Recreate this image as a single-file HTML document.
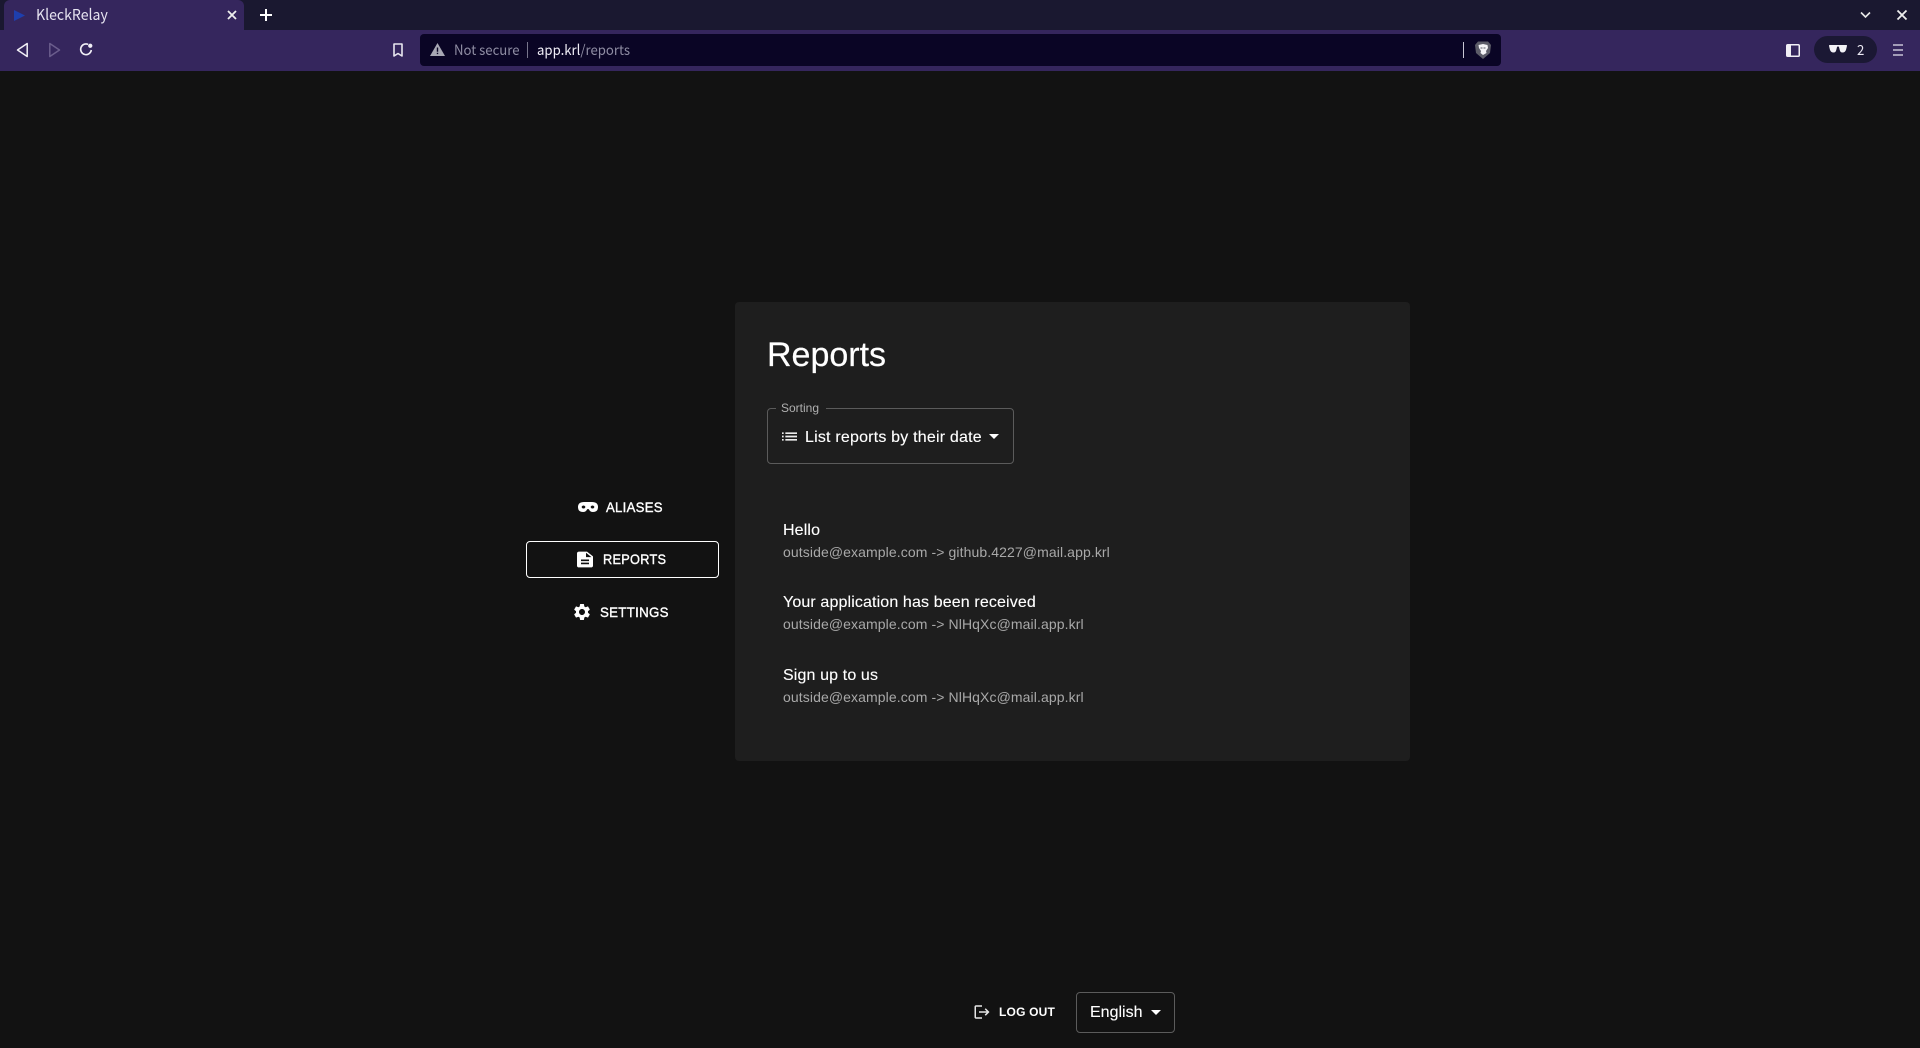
<!DOCTYPE html>
<html lang="en">
<head>
<meta charset="utf-8">
<title>KleckRelay</title>
<style>
html,body{margin:0;padding:0;width:1920px;height:1048px;overflow:hidden;background:#121212;color:#fff;font-family:"Liberation Sans",sans-serif}
.a{position:absolute;white-space:nowrap}
svg{position:absolute;display:block;overflow:visible}
.ui{font-family:"Noto Sans CJK JP","Liberation Sans",sans-serif;font-size:14px;line-height:20px;transform:scaleX(.94);transform-origin:0 50%}
.nav{font-size:14px;line-height:20px;color:#fff;-webkit-text-stroke:.4px #fff;letter-spacing:.3px;transform-origin:0 50%}
.h{font-size:16px;line-height:20px;color:#fff;letter-spacing:.13px;-webkit-text-stroke:.12px #fff}
.s{font-size:14px;line-height:18px;color:#a9a9a9;letter-spacing:.1px}
</style>
</head>
<body>
<div class="a" style="left:0;top:0;width:1920px;height:30px;background:#1a1830"></div>
<div class="a" style="left:0;top:30px;width:1920px;height:41px;background:#35265d"></div>
<div class="a" style="left:4px;top:0;width:240px;height:30px;background:#35265d;border-radius:6px 6px 0 0"></div>

<svg style="left:13px;top:9px" width="14" height="13" viewBox="0 0 14 13"><path d="M1 1l11 5.500L1 12z" fill="#1e3fae"/></svg>
<div class="a ui" style="left:36px;top:5px;color:#e6e3f0;font-size:15px">KleckRelay</div>
<svg style="left:227px;top:10px" width="10" height="10" viewBox="0 0 10 10"><path d="M1 1l8 8M9 1l-8 8" stroke="#eee" stroke-width="1.800"/></svg>
<svg style="left:260px;top:9px" width="12" height="12" viewBox="0 0 12 12"><path d="M6 0v12M0 6h12" stroke="#fff" stroke-width="2"/></svg>
<svg style="left:1860px;top:11px" width="11" height="8" viewBox="0 0 11 8"><path d="M1 1.500l4.500 4.500L10 1.500" fill="none" stroke="#e8e8e8" stroke-width="1.600"/></svg>
<svg style="left:1897px;top:10px" width="10" height="10" viewBox="0 0 10 10"><path d="M.5.500l9 9M9.500.500l-9 9" stroke="#eee" stroke-width="1.800"/></svg>

<svg style="left:16px;top:42px" width="13" height="16" viewBox="0 0 13 16"><path d="M11.200 1.500v13L1.500 8z" fill="none" stroke="#f0eef5" stroke-width="1.500" stroke-linejoin="round"/></svg>
<svg style="left:48px;top:42px" width="13" height="16" viewBox="0 0 13 16"><path d="M1.800 1.500v13L11.500 8z" fill="none" stroke="#6a5d8c" stroke-width="1.500" stroke-linejoin="round"/></svg>
<svg style="left:79px;top:42px" width="15" height="15" viewBox="0 0 14 14"><path d="M11.500 7.500A5 5 0 1 1 8.500 2.200" fill="none" stroke="#f0eef5" stroke-width="1.500"/><circle cx="10.500" cy="3.500" r="2" fill="#f0eef5"/></svg>
<svg style="left:393px;top:43px" width="10" height="14" viewBox="0 0 10 14"><path d="M1 1h8v12L5 10.500 1 13z" fill="none" stroke="#e8e6ef" stroke-width="1.600" stroke-linejoin="round"/></svg>

<div class="a" style="left:420px;top:34px;width:1081px;height:32px;background:#0a0525;border-radius:4px"></div>
<svg style="left:430px;top:43px" width="15" height="13" viewBox="0 0 15 13"><path d="M7.500 0L15 13H0z" fill="#a8a8b4"/><path d="M6.800 4.500h1.400v4.200H6.800zM6.800 9.700h1.400v1.400H6.800z" fill="#0a0525"/></svg>
<div class="a ui" style="left:454px;top:40px;color:#8f8da3">Not secure</div>
<div class="a" style="left:527px;top:42px;width:1px;height:16px;background:#77758c"></div>
<div class="a ui" style="left:537px;top:40px;color:#f1eff7">app.krl<span style="color:#8f8da3">/reports</span></div>
<div class="a" style="left:1463px;top:42px;width:1px;height:16px;background:#c8c6d4"></div>
<svg style="left:1475px;top:41px" width="16" height="18" viewBox="0 0 16 18"><path d="M3 0.500h10L16 4l-1 8-7 6-7-6L0 4z" fill="#5c5c68"/><path d="M3.500 4l4.500-1 4.500 1 .5 3-2 3 .5 2L8 14l-2.500-2 .5-2-2-3z" fill="#f4f4f6"/><path d="M5.500 6.500h2v1h-2zM8.500 6.500h2v1h-2z" fill="#5c5c68"/></svg>

<svg style="left:1786px;top:44px" width="14" height="13" viewBox="0 0 14 13"><rect x=".75" y=".75" width="12.500" height="11.500" rx="1" fill="none" stroke="#f0eef5" stroke-width="1.500"/><rect x="1" y="1" width="4" height="11" fill="#f0eef5"/></svg>
<div class="a" style="left:1814px;top:36px;width:63px;height:27px;background:#1b1834;border-radius:14px"></div>
<svg style="left:1828px;top:45px" width="20" height="8" viewBox="0 0 20 9"><path d="M0 0h20v1.500l-1 4Q18 8.500 15 8.500 12.500 8.500 11.800 5L11 1.800H9L8.200 5Q7.500 8.500 5 8.500 2 8.500 1 5.500L0 1.500z" fill="#f4f3f8"/></svg>
<div class="a ui" style="left:1857px;top:40px;color:#eceaf4">2</div>
<svg style="left:1893px;top:44px" width="10" height="12" viewBox="0 0 10 12"><path d="M0 1h10M0 6h10M0 11h10" stroke="#c8c4d6" stroke-width="1.500"/></svg>

<div class="a" style="left:735px;top:302px;width:675px;height:459px;background:#1e1e1e;border-radius:4px"></div>
<div class="a" style="left:767px;top:335px;font-size:34px;line-height:40px;color:#fff;-webkit-text-stroke:.2px #fff">Reports</div>

<div class="a" style="left:767px;top:408px;width:245px;height:54px;border:1px solid #5b5b5b;border-radius:4px"></div>
<div class="a" style="left:776px;top:405px;width:50px;height:6px;background:#1e1e1e"></div>
<div class="a" style="left:781px;top:400px;font-size:12px;line-height:16px;color:#b0b0b0">Sorting</div>
<svg style="left:782px;top:429px" width="15" height="15" viewBox="3 3 18 18"><path d="M3 13h2v-2H3v2zm0 4h2v-2H3v2zm0-8h2V7H3v2zm4 4h14v-2H7v2zm0 4h14v-2H7v2zM7 7v2h14V7H7z" fill="#eee"/></svg>
<div class="a" style="left:805px;top:428px;font-size:16px;line-height:20px;color:#fff;letter-spacing:.2px;-webkit-text-stroke:.12px #fff">List reports by their date</div>
<svg style="left:989px;top:434px" width="10" height="5" viewBox="0 0 10 5"><path d="M0 0l5 5 5-5z" fill="#fff"/></svg>

<div class="a h" style="left:783px;top:521px">Hello</div>
<div class="a s" style="left:783px;top:543px">outside@example.com -&gt; github.4227@mail.app.krl</div>
<div class="a h" style="left:783px;top:593px">Your application has been received</div>
<div class="a s" style="left:783px;top:615px">outside@example.com -&gt; NlHqXc@mail.app.krl</div>
<div class="a h" style="left:783px;top:666px">Sign up to us</div>
<div class="a s" style="left:783px;top:688px">outside@example.com -&gt; NlHqXc@mail.app.krl</div>

<svg style="left:578px;top:502px" width="20" height="10" viewBox="0 0 20 10"><path fill-rule="evenodd" d="M6 0h8q6 0 6 5 0 5-5 5-3 0-4-2.500Q10 6.500 9 7.500 8 10 5 10 0 10 0 5 0 0 6 0zM5.500 3.500a1.800 1.500 0 1 0 .01 0zM14.500 3.500a1.800 1.500 0 1 0 .01 0z" fill="#fff"/></svg>
<div class="a nav" style="left:606px;top:497px;transform:scaleX(.94)">ALIASES</div>

<div class="a" style="left:526px;top:541px;width:191px;height:35px;border:1px solid #fff;border-radius:4px"></div>
<svg style="left:573px;top:550px" width="24" height="19" viewBox="0 0 24 24" preserveAspectRatio="none"><path d="M14 2H6c-1.100 0-1.990.9-1.990 2L4 20c0 1.100.89 2 1.990 2H18c1.100 0 2-.9 2-2V8l-6-6zm2 16H8v-2h8v2zm0-4H8v-2h8v2zm-3-5V3.500L18.500 9H13z" fill="#fff"/></svg>
<div class="a nav" style="left:603px;top:549px;transform:scaleX(.91)">REPORTS</div>

<svg style="left:572px;top:602px" width="20" height="20" viewBox="0 0 24 24"><path d="M19.140 12.940c.04-.3.06-.61.06-.94 0-.32-.02-.64-.07-.94l2.030-1.580c.18-.14.23-.41.12-.61l-1.920-3.320c-.12-.22-.37-.29-.59-.22l-2.390.96c-.5-.38-1.030-.7-1.620-.94l-.36-2.540c-.04-.24-.24-.41-.48-.41h-3.840c-.24 0-.43.17-.47.41l-.36 2.540c-.59.24-1.130.57-1.620.94l-2.390-.96c-.22-.08-.47 0-.59.22L2.740 8.870c-.12.21-.08.47.12.61l2.030 1.580c-.05.3-.09.63-.09.94s.02.64.07.94l-2.030 1.580c-.18.14-.23.41-.12.61l1.920 3.320c.12.22.37.29.59.22l2.390-.96c.5.38 1.030.7 1.620.94l.36 2.540c.05.24.24.41.48.41h3.840c.24 0 .44-.17.47-.41l.36-2.540c.59-.24 1.130-.56 1.620-.94l2.390.96c.22.08.47 0 .59-.22l1.920-3.320c.12-.22.07-.47-.12-.61l-2.010-1.580zM12 15.600c-1.980 0-3.600-1.620-3.600-3.600s1.620-3.600 3.600-3.600 3.600 1.620 3.600 3.600-1.620 3.600-3.600 3.600z" fill="#fff"/></svg>
<div class="a nav" style="left:600px;top:602px;transform:scaleX(.95)">SETTINGS</div>

<svg style="left:973px;top:1003px" width="18" height="18" viewBox="0 0 24 24"><path d="M17 7l-1.410 1.410L18.170 11H8v2h10.170l-2.580 2.580L17 17l5-5zM4 5h8V3H4c-1.100 0-2 .9-2 2v14c0 1.100.9 2 2 2h8v-2H4V5z" fill="#e6e6e6"/></svg>
<div class="a" style="left:999px;top:1003px;font-size:12px;line-height:18px;font-weight:700;color:#fff;letter-spacing:.2px">LOG OUT</div>
<div class="a" style="left:1076px;top:992px;width:97px;height:39px;border:1px solid #5b5b5b;border-radius:4px"></div>
<div class="a" style="left:1090px;top:1003px;font-size:16px;line-height:20px;color:#fff;-webkit-text-stroke:.12px #fff">English</div>
<svg style="left:1151px;top:1010px" width="10" height="5" viewBox="0 0 10 5"><path d="M0 0l5 5 5-5z" fill="#fff"/></svg>
</body>
</html>
